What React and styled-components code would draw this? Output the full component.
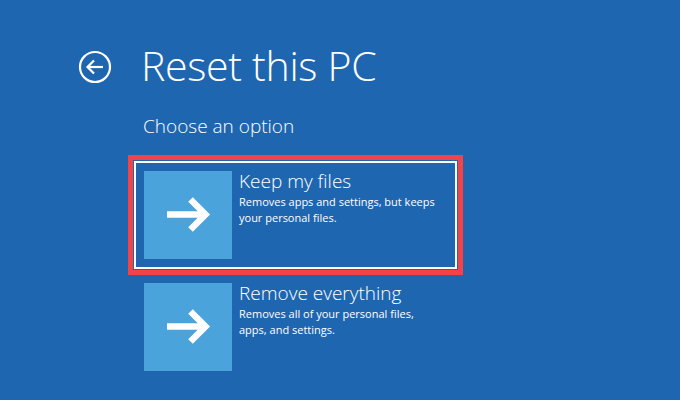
import React from 'react';
import styled, { createGlobalStyle } from 'styled-components';

const GlobalStyle = createGlobalStyle`
  html, body {
    margin: 0;
    padding: 0;
    background: #1f66b1;
  }
  body {
    font-family: 'Open Sans', 'Noto Sans', sans-serif;
    color: #fff;
  }
`;

const options = [
  {
    title: 'Keep my files',
    text: 'Removes apps and settings, but keeps your personal files.',
    selected: true,
  },
  {
    title: 'Remove everything',
    text: 'Removes all of your personal files, apps, and settings.',
  },
];

const App = () => {
  return (
    <Page>
      <GlobalStyle />
      <Header>
        <BackButton aria-label='Back'>
          <svg width='34' height='34' viewBox='0 0 34 34'>
            <circle cx='17' cy='17' r='15' fill='none' stroke='#fff' strokeWidth='2.2' />
            <path d='M9.5 17 H25' stroke='#fff' strokeWidth='2.2' fill='none' />
            <path d='M16 10.5 L9.5 17 L16 23.5' stroke='#fff' strokeWidth='2.2' fill='none' />
          </svg>
        </BackButton>
        <Title>Reset this PC</Title>
      </Header>
      <Body>
        <Subtitle>Choose an option</Subtitle>
        <OptionList>
          {options.map(option => (
            <Option key={option.title} selected={option.selected}>
              <Tile>
                <svg width='88' height='88' viewBox='0 0 88 88'>
                  <path d='M23 43.5 H62' stroke='#fff' strokeWidth='6.5' fill='none' />
                  <path
                    d='M46.5 28.5 L61.5 43.5 L46.5 58.5'
                    stroke='#fff'
                    strokeWidth='6.5'
                    fill='none'
                    strokeLinejoin='miter'
                  />
                </svg>
              </Tile>
              <OptionText>
                <OptionTitle>{option.title}</OptionTitle>
                <OptionDesc>{option.text}</OptionDesc>
              </OptionText>
            </Option>
          ))}
        </OptionList>
      </Body>
    </Page>
  );
};

const Page = styled.div`
  width: 680px;
  height: 400px;
  box-sizing: border-box;
  padding: 45px 0 0 78px;
  overflow: hidden;
`;

const Header = styled.div`
  display: flex;
  align-items: center;
  gap: 29px;
`;

const BackButton = styled.div`
  width: 34px;
  height: 34px;
  display: flex;
  margin-top: 3px;
`;

const Title = styled.h1`
  margin: 0;
  font-size: 41px;
  font-weight: 300;
  line-height: 40px;
  letter-spacing: -0.3px;
`;

const Body = styled.div`
  margin-left: 56px;
`;

const Subtitle = styled.h2`
  margin: 29px 0 23px 9px;
  font-size: 19px;
  font-weight: 300;
  line-height: 24px;
`;

const OptionList = styled.div`
  display: flex;
  flex-direction: column;
  gap: 4px;
`;

const Option = styled.div`
  width: 323px;
  box-sizing: border-box;
  display: flex;
  gap: 7px;
  padding: 8px;
  border: 2px solid ${p => (p.selected ? '#fff' : 'transparent')};
  outline: ${p => (p.selected ? '5px solid #f44346' : 'none')};
  outline-offset: 1px;
`;

const Tile = styled.div`
  width: 88px;
  height: 88px;
  flex-shrink: 0;
  background: #4aa3db;
  display: flex;
`;

const OptionText = styled.div`
  display: flex;
  flex-direction: column;
`;

const OptionTitle = styled.div`
  font-size: 19px;
  font-weight: 300;
  line-height: 24px;
  margin-top: -2px;
`;

const OptionDesc = styled.div`
  font-size: 11px;
  line-height: 16px;
  margin-top: 1px;
  width: 205px;
`;

export default App;
